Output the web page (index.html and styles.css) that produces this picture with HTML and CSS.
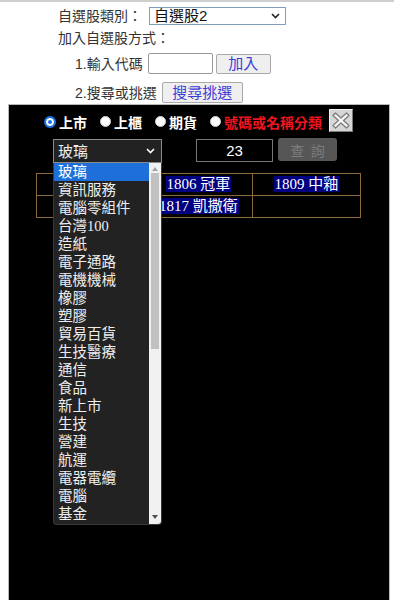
FILE: index.html
```html
<!DOCTYPE html>
<html lang="zh-Hant">
<head>
<meta charset="utf-8">
<title>自選股</title>
<link rel="stylesheet" href="styles.css">
</head>
<body>
<div class="topline"></div>
<div class="form">
  <div class="row r1">
    <span class="lbl">自選股類別：</span>
    <div class="sel1"><span>自選股2</span>
      <svg class="chev" width="9" height="6" viewBox="0 0 9 6"><path d="M1 1 L4.5 4.5 L8 1" fill="none" stroke="#222" stroke-width="1.6"/></svg>
    </div>
  </div>
  <div class="row r2"><span class="lbl">加入自選股方式：</span></div>
  <div class="row r3">
    <span class="lbl">1.輸入代碼</span>
    <span class="inp"></span>
    <span class="btn btn-add">加入</span>
  </div>
  <div class="row r4">
    <span class="lbl">2.搜尋或挑選</span>
    <span class="btn btn-search">搜尋挑選</span>
  </div>
</div>

<div class="panel">
  <div class="radios">
    <span class="radio checked"></span><span class="rlabel">上市</span>
    <span class="radio"></span><span class="rlabel">上櫃</span>
    <span class="radio"></span><span class="rlabel">期貨</span>
    <span class="radio"></span><span class="rlabel red">號碼或名稱分類</span>
    <span class="xbtn">
      <svg width="20" height="19" viewBox="0 0 20 19"><polygon points="2,4.5 4.5,2 10,7 15.5,2 18,4.5 12.5,9.5 18,14.5 15.5,17 10,12 4.5,17 2,14.5 7.5,9.5" fill="#f6f6f6" stroke="#7c7c7c" stroke-width="1.3" stroke-linejoin="round"/></svg>
    </span>
  </div>
  <div class="controls">
    <div class="sel2"><span>玻璃</span>
      <svg class="chev" width="9" height="6" viewBox="0 0 9 6"><path d="M1 1 L4.5 4.5 L8 1" fill="none" stroke="#fff" stroke-width="1.6"/></svg>
    </div>
    <div class="num">23</div>
    <div class="query">查&nbsp;&nbsp;詢</div>
  </div>
  <table class="grid">
    <tr>
      <td></td>
      <td><span class="hl">1806 冠軍</span></td>
      <td><span class="hl">1809 中釉</span></td>
    </tr>
    <tr>
      <td></td>
      <td><span class="hl">1817 凱撒衛</span></td>
      <td></td>
    </tr>
  </table>
  <div class="dropdown">
    <ul class="opts">
      <li class="on">玻璃</li>
      <li>資訊服務</li>
      <li>電腦零組件</li>
      <li>台灣100</li>
      <li>造紙</li>
      <li>電子通路</li>
      <li>電機機械</li>
      <li>橡膠</li>
      <li>塑膠</li>
      <li>貿易百貨</li>
      <li>生技醫療</li>
      <li>通信</li>
      <li>食品</li>
      <li>新上市</li>
      <li>生技</li>
      <li>營建</li>
      <li>航運</li>
      <li>電器電纜</li>
      <li>電腦</li>
      <li>基金</li>
    </ul>
    <div class="sbar">
      <span class="arr up"></span>
      <span class="thumb"></span>
      <span class="arr down"></span>
    </div>
  </div>
</div>
</body>
</html>
```
FILE: styles.css
```css
* { box-sizing: border-box; }
html, body { margin: 0; padding: 0; background: #fff; }
body {
  font-family: "Liberation Sans", "Noto Sans CJK TC", sans-serif;
  font-size: 14px;
  color: #333;
  overflow: hidden;
}
.topline { height: 2px; background: #cfcfcf; }
.form { padding-top: 3px; padding-left: 58px; }
.row { display: flex; align-items: center; }
.lbl { line-height: 16px; white-space: nowrap; }
.r1 { height: 22px; }
.r2 { height: 20px; margin-top: 1px; }
.r3 { height: 23px; margin-top: 4px; padding-left: 17px; }
.r4 { height: 23px; margin-top: 6px; padding-left: 17px; }

.sel1 {
  margin-left: 7px;
  width: 137px; height: 18px;
  border: 1px solid #7f9db9;
  display: flex; align-items: center; justify-content: space-between;
  padding: 0 5px 0 4px;
  font-size: 15px; color: #111;
  line-height: 16px;
}
.inp {
  margin-left: 5px;
  width: 65px; height: 21px;
  border: 1px solid #9a9a9a; border-radius: 2px;
  background: #fff;
}
.btn {
  display: inline-flex; align-items: center; justify-content: center;
  height: 20px;
  border: 1px solid #a9a9a9; border-radius: 2px;
  background: #efefef;
  color: #3d3dd6;
  font-size: 15px; line-height: 16px;
}
.btn-add { margin-left: 3px; width: 55px; }
.btn-search { margin-left: 5px; width: 81px; height: 21px; }

.panel {
  position: relative;
  margin-left: 8px;
  width: 382px; height: 520px;
  background: #000;
  border: 1px solid #b9b9b9;
}
.radios {
  display: flex; align-items: center;
  height: 24px; margin-top: 3px;
  padding-left: 35px;
}
.radio {
  width: 11px; height: 11px; border-radius: 50%;
  background: #fff; border: 1px solid #d0d0d0;
  margin-top: 3px; margin-right: 3px;
  flex: none;
}
.radio.checked {
  width: 12px; height: 12px;
  border: 2px solid #1a73e8;
  background: #1a73e8;
  box-shadow: inset 0 0 0 2px #fff;
}
.rlabel {
  color: #fff; font-weight: bold; font-size: 14px; line-height: 16px;
  margin-top: 3px; margin-right: 13px;
  font-family: "Noto Sans CJK TC", sans-serif;
}
.rlabel.red { color: #f0141e; margin-right: 7px; }
.xbtn {
  width: 24px; height: 23px;
  background: #d6d6d6;
  border: 1px solid; border-color: #f2f2f2 #7a7a7a #7a7a7a #f2f2f2;
  display: flex; align-items: center; justify-content: center;
}

.controls { display: flex; align-items: flex-start; margin-top: 6px; height: 25px; }
.sel2 {
  margin-left: 44px; margin-top: 1px;
  width: 109px; height: 24px;
  background: #222; border: 1px solid #8a8a8a;
  display: flex; align-items: center; justify-content: space-between;
  padding: 0 6px 0 4px;
  color: #eee; font-size: 15px; line-height: 16px;
  font-family: "Noto Sans CJK TC", sans-serif;
}
.num {
  margin-left: 34px; margin-top: 1px;
  width: 77px; height: 23px;
  border: 1px solid #777; background: #000;
  color: #fff; font-size: 15px;
  display: flex; align-items: center; justify-content: center;
}
.query {
  margin-left: 5px;
  width: 59px; height: 23px;
  background: #565656; border-radius: 3px;
  color: #7c7c7c; font-size: 14px;
  display: flex; align-items: center; justify-content: center;
  font-family: "Noto Sans CJK TC", sans-serif;
}

.grid {
  margin-top: 10px; margin-left: 27px;
  width: 325px;
  border-collapse: collapse;
  table-layout: fixed;
  font-family: "Liberation Serif", "Noto Sans CJK TC", serif;
  font-size: 15px;
}
.grid td {
  border: 1px solid #8b6b3c;
  height: 22px; padding: 0;
  text-align: center; color: #fff;
}
.hl { background: #000080; line-height: 16px; display: inline-block; padding: 0 1px; }

.dropdown {
  position: absolute;
  left: 44px; top: 58px;
  width: 109px; height: 362px;
  background: #222;
  border: 1px solid #3a3a3a;
  border-top: none;
  border-radius: 0 0 4px 4px;
  display: flex;
  overflow: hidden;
}
.opts {
  list-style: none; margin: 0; padding: 0;
  flex: 1;
  font-family: "Liberation Serif", "Noto Sans CJK TC", serif;
  font-size: 14.5px; color: #eee;
}
.opts li { height: 18px; line-height: 18px; padding-left: 4px; white-space: nowrap; }
.opts li.on { background: #1e6fd9; color: #fff; }
.sbar {
  width: 12px; background: #f1f1f1;
  position: relative; flex: none;
}
.thumb {
  position: absolute; left: 2px; right: 2px; top: 10px; height: 176px;
  background: #c1c1c1;
}
.arr { position: absolute; left: 3px; width: 0; height: 0; border-left: 3px solid transparent; border-right: 3px solid transparent; }
.arr.up { top: 4px; border-bottom: 4px solid #a3a3a3; }
.arr.down { bottom: 5px; border-top: 4px solid #505050; }
.chev { flex: none; }
```
